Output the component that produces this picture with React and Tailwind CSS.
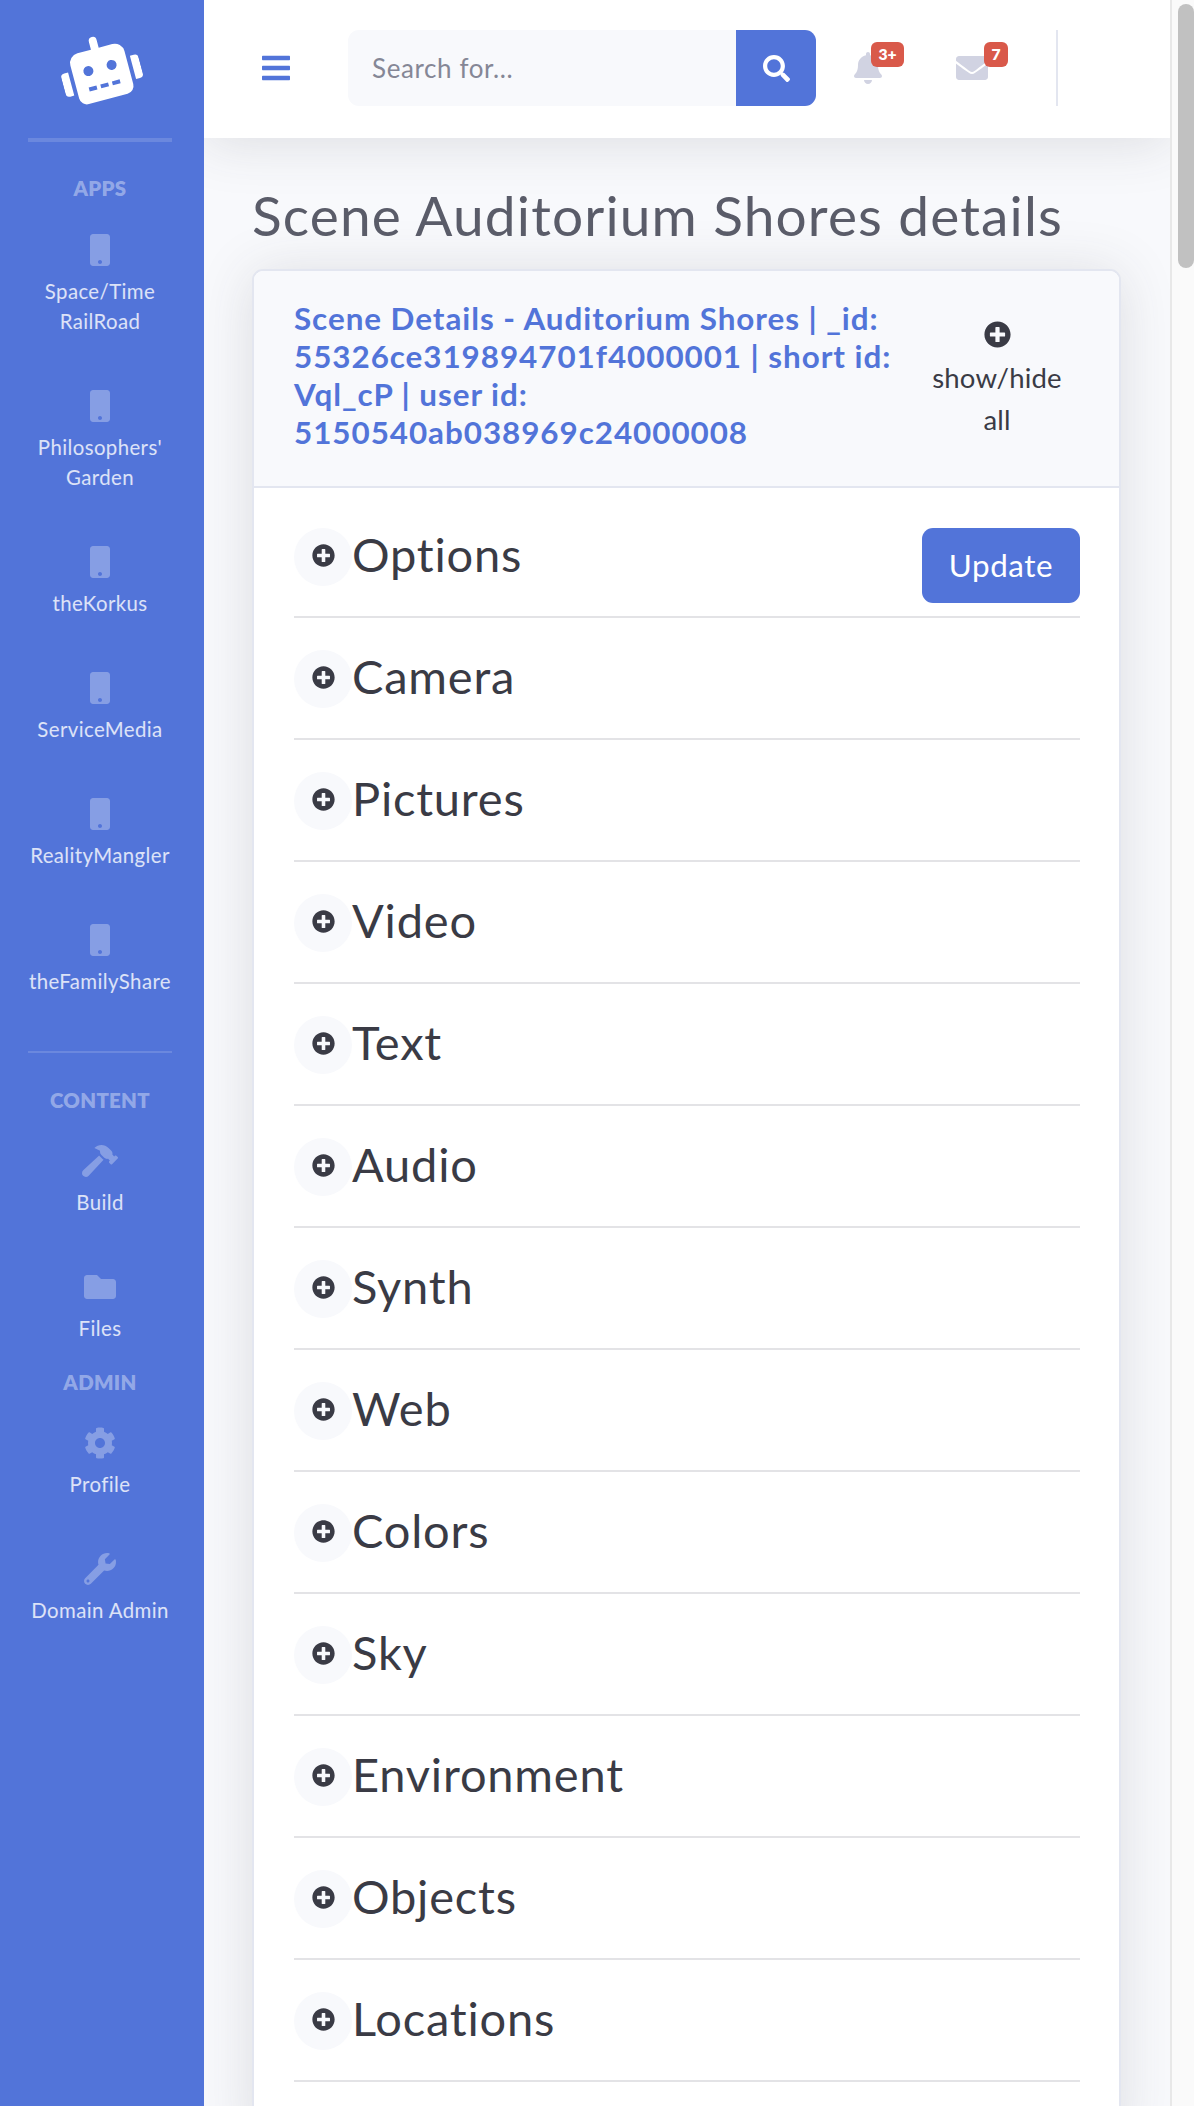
import { FaRobot, FaBars, FaSearch, FaBell, FaEnvelope, FaMobile, FaHammer, FaFolder, FaCog, FaWrench, FaPlusCircle } from "react-icons/fa";

const sections = ["Options", "Camera", "Pictures", "Video", "Text", "Audio", "Synth", "Web", "Colors", "Sky", "Environment", "Objects", "Locations"];

const NavItem = ({ icon, lines, tight }) => (
  <div className={`flex flex-col items-center ${tight ? "pb-[27px]" : "pb-[54px]"}`}>
    <div className="h-[32px] flex items-center justify-center text-white/30 mb-[10px]">{icon}</div>
    {lines.map((l) => (
      <div key={l} className="h-[30px] leading-[30px] text-[20.4px] tracking-[0.4px] text-white/80 whitespace-nowrap">{l}</div>
    ))}
  </div>
);

const NavLabel = ({ children, first }) => (
  <div className={`h-[24px] leading-[24px] text-center text-[20.4px] tracking-[0.3px] font-extrabold text-white/40 ${first ? "mb-[34px]" : "mb-[33px]"}`}>{children}</div>
);

const Sidebar = () => (
  <aside className="w-[204px] shrink-0 bg-[#5274d9] pr-[4px]">
    <div className="h-[138px] pb-[2px] flex items-center justify-center">
      <FaRobot size={80} className="text-white -rotate-15" />
    </div>
    <div className="mx-[28px] h-[4px] bg-white/15 mb-[34px]" />
    <NavLabel first>APPS</NavLabel>
    <NavItem icon={<FaMobile size={32} />} lines={["Space/Time", "RailRoad"]} />
    <NavItem icon={<FaMobile size={32} />} lines={["Philosophers'", "Garden"]} />
    <NavItem icon={<FaMobile size={32} />} lines={["theKorkus"]} />
    <NavItem icon={<FaMobile size={32} />} lines={["ServiceMedia"]} />
    <NavItem icon={<FaMobile size={32} />} lines={["RealityMangler"]} />
    <NavItem icon={<FaMobile size={32} />} lines={["theFamilyShare"]} />
    <div className="mt-[1px] mx-[28px] h-[2px] bg-white/15 mb-[35px]" />
    <NavLabel>CONTENT</NavLabel>
    <NavItem icon={<FaHammer size={36} />} lines={["Build"]} />
    <NavItem icon={<FaFolder size={32} />} lines={["Files"]} tight />
    <NavLabel>ADMIN</NavLabel>
    <NavItem icon={<FaCog size={32} />} lines={["Profile"]} />
    <NavItem icon={<FaWrench size={32} />} lines={["Domain Admin"]} />
  </aside>
);

const Topbar = () => (
  <header className="relative z-10 h-[138px] pb-[2px] bg-white flex items-center shadow-[0_4px_55px_0_rgba(58,59,69,0.15)]">
    <FaBars size={32} className="ml-[56px] text-[#5274d9]" />
    <div className="ml-[56px] flex h-[76px] w-[468px]">
      <div className="flex-1 bg-[#f8f9fc] rounded-l-[11px] pl-[24px] flex items-center text-[26px] tracking-[0.6px] text-[#858796]">Search for...</div>
      <div className="w-[80px] bg-[#5274d9] rounded-r-[11px] flex items-center justify-center text-white">
        <FaSearch size={27} />
      </div>
    </div>
    <div className="relative ml-[38px] w-[28px] h-[32px] text-[#d1d3e2]">
      <FaBell size={32} className="-ml-[2px]" />
      <span className="absolute left-[17px] -top-[10px] w-[33px] h-[25px] rounded-[6px] bg-[#d9594a] text-white text-[15.7px] font-extrabold leading-[25px] text-center">3+</span>
    </div>
    <div className="relative ml-[74px] w-[32px] h-[32px] text-[#d1d3e2]">
      <FaEnvelope size={32} />
      <span className="absolute left-[28px] -top-[10px] w-[24px] h-[25px] rounded-[6px] bg-[#d9594a] text-white text-[15.7px] font-extrabold leading-[25px] text-center">7</span>
    </div>
    <div className="ml-[68px] w-[2px] h-[76px] bg-[#e3e6f0]" />
  </header>
);

const Row = ({ name, children }) => (
  <div className="h-[122px] pt-[32px] border-b-2 border-[#e3e3e6] flex items-start justify-between">
    <div className="flex items-center h-[58px]">
      <div className="w-[58px] h-[58px] pb-[3px] rounded-full bg-[#f8f9fc] flex items-center justify-center text-[#3a3b45]">
        <FaPlusCircle size={23} />
      </div>
      <div className="text-[47px] leading-[56px] tracking-[0.8px] pb-[6px] text-[#3a3b45]">{name}</div>
    </div>
    {children}
  </div>
);

export default function App() {
  return (
    <div className="w-[1194px] h-[2106px] overflow-hidden flex font-[Lato,sans-serif]">
      <Sidebar />
      <main className="w-[966px] shrink-0 bg-[#f8f9fc] overflow-hidden">
        <Topbar />
        <div className="px-[48px] pt-[44px]">
          <h1 className="text-[55px] leading-[66px] tracking-[1.15px] text-[#5a5c69] mb-[21px] whitespace-nowrap">Scene Auditorium Shores details</h1>
          <div className="w-[869px] border-2 border-[#e3e6f0] rounded-[11px] bg-white overflow-hidden shadow-[0_4px_55px_0_rgba(58,59,69,0.15)]">
            <div className="h-[217px] pl-[40px] pr-[39px] pt-[28px] bg-[#f8f9fc] border-b-2 border-[#e3e6f0] flex justify-between">
              <div className="text-[31.4px] leading-[38px] tracking-[0.95px] font-bold text-[#5274d9] whitespace-nowrap">
                Scene Details - Auditorium Shores | _id:<br />
                55326ce319894701f4000001 | short id:<br />
                Vql_cP | user id:<br />
                5150540ab038969c24000008
              </div>
              <div className="w-[166px] flex flex-col items-center pt-[22px] text-[#3a3b45]">
                <FaPlusCircle size={27} />
                <div className="mt-[9px] text-[27.5px] leading-[42px] tracking-[0.2px] text-center">show/hide<br />all</div>
              </div>
            </div>
            <div className="pl-[40px] pr-[39px] pt-[8px] pb-[60px]">
              {sections.map((s, i) => (
                <Row key={s} name={s}>
                  {i === 0 && (
                    <button className="w-[158px] h-[75px] rounded-[11px] bg-[#5274d9] text-white text-[31.4px] tracking-[0.6px]">Update</button>
                  )}
                </Row>
              ))}
            </div>
          </div>
        </div>
      </main>
      <div className="w-[24px] shrink-0 bg-[#fafafa] border-l-2 border-[#e8e8e8] pl-[6px] pt-[4px]">
        <div className="w-[16px] h-[264px] rounded-full bg-[#c1c1c1]" />
      </div>
    </div>
  );
}
